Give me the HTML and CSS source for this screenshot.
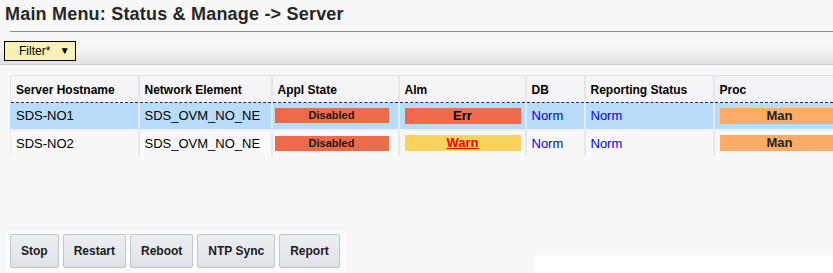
FILE: index.html
```html
<!DOCTYPE html>
<html lang="en">
<head>
  <meta charset="UTF-8" />
  <title>Status &amp; Manage - Server</title>
  <link rel="stylesheet" href="styles.css">
</head>
<body>

  <!-- Page title -->
  <div class="page-head">
    <h1>Main Menu: Status &amp; Manage -&gt; Server</h1>
    <div class="rule"></div>
  </div>

  <!-- Filter toolbar -->
  <div class="toolbar">
    <button class="filter">Filter* <span class="caret">&#9660;</span></button>
  </div>

  <!-- Server grid -->
  <div class="grid-wrap">
    <table class="grid">
      <colgroup>
        <col class="c-host"><col class="c-ne"><col class="c-appl"><col class="c-alm">
        <col class="c-db"><col class="c-rep"><col class="c-proc">
      </colgroup>
      <thead>
        <tr>
          <th>Server Hostname</th>
          <th>Network Element</th>
          <th>Appl State</th>
          <th>Alm</th>
          <th>DB</th>
          <th>Reporting Status</th>
          <th class="proc-head">Proc</th>
        </tr>
      </thead>
      <tbody>
        <tr class="selected">
          <td>SDS-NO1</td>
          <td>SDS_OVM_NO_NE</td>
          <td><div class="state state-disabled">Disabled</div></td>
          <td><div class="alm alm-err">Err</div></td>
          <td class="norm">Norm</td>
          <td class="norm">Norm</td>
          <td><div class="proc">Man</div></td>
        </tr>
        <tr>
          <td>SDS-NO2</td>
          <td>SDS_OVM_NO_NE</td>
          <td><div class="state state-disabled">Disabled</div></td>
          <td><div class="alm alm-warn"><a href="#">Warn</a></div></td>
          <td class="norm">Norm</td>
          <td class="norm">Norm</td>
          <td><div class="proc">Man</div></td>
        </tr>
      </tbody>
    </table>
  </div>

  <!-- Action buttons -->
  <div class="footer">
    <div class="actions">
      <button class="btn">Stop</button>
      <button class="btn">Restart</button>
      <button class="btn">Reboot</button>
      <button class="btn">NTP Sync</button>
      <button class="btn">Report</button>
    </div>
    <div class="footer-gap"></div>
    <div class="footer-blank"></div>
  </div>

</body>
</html>
```

FILE: styles.css
```css
* {
  box-sizing: border-box;
  margin: 0;
  padding: 0;
}

html, body {
  width: 833px;
  height: 273px;
  overflow: hidden;
}

body {
  font-family: "Liberation Sans", Arial, sans-serif;
  background: #f8f8f8;
  color: #000;
}

/* Title */
.page-head {
  height: 33px;
}

h1 {
  font-size: 18px;
  font-weight: bold;
  color: #262626;
  padding: 4px 0 0 5px;
  height: 32px;
  letter-spacing: 0.2px;
}

.rule {
  margin-left: 10px;
  height: 1px;
  background: #8a8a8a;
  margin-top: -1px;
}

/* Toolbar */
.toolbar {
  height: 32px;
  padding: 8px 0 0 4px;
  background: linear-gradient(#f9f9f9 0%, #f6f6f6 45%, #e2e2e2 100%);
  border-bottom: 1px solid #cbcbcb;
}

.filter {
  width: 72px;
  height: 20px;
  background: #f8f1b8;
  border: 1px solid #000;
  font-family: "Liberation Sans", Arial, sans-serif;
  font-size: 12px;
  color: #000;
  text-align: left;
  padding-left: 14px;
}

.filter .caret {
  font-size: 10px;
  margin-left: 6px;
  position: relative;
  top: -1px;
}

/* Grid */
.grid-wrap {
  margin: 10px 0 0 10px;
  overflow: hidden;
  height: 84px;
}

.grid {
  table-layout: fixed;
  border-collapse: collapse;
  width: 832px;
}

.c-host { width: 128px; }
.c-ne { width: 133px; }
.c-appl { width: 127px; }
.c-alm { width: 127px; }
.c-db { width: 59px; }
.c-rep { width: 129px; }
.c-proc { width: 129px; }

.grid th {
  height: 27px;
  text-align: left;
  font-size: 12px;
  font-weight: bold;
  padding: 1px 0 0 5px;
  background: #f5f5f7;
  border-top: 1px solid #dfe2e8;
  border-left: 2px solid #e4e6ea;
  border-bottom: 1px dashed #1a237e;
}

.grid th:first-child {
  border-left: 1px solid #e4e6ea;
}

.grid th.proc-head {
  background: #f1f3f8;
}

.grid td {
  height: 27px;
  font-size: 13px;
  padding: 0 0 0 5px;
  border-left: 2px solid #e8e8e8;
  white-space: nowrap;
  vertical-align: middle;
}

.grid td:first-child {
  border-left: 1px solid #e8e8e8;
}

.grid tr.selected td {
  background: #b9dcfa;
  border-left-color: #dbeefd;
  border-bottom: 2px solid #eaf3fb;
}

.grid tr.selected td:first-child {
  border-left-color: #b9dcfa;
}

.grid tbody tr:last-child td {
  height: 26px;
}

.norm {
  color: #0000ee;
}

/* Status boxes */
.state {
  width: 114px;
  height: 15px;
  margin-left: -3px;
  font-size: 11px;
  font-weight: bold;
  text-align: center;
  line-height: 15px;
  color: #1a1a1a;
}

.state-disabled {
  background: #ed6a4b;
}

.alm {
  width: 116px;
  height: 16px;
  font-size: 13px;
  font-weight: bold;
  text-align: center;
  line-height: 16px;
}

.alm-err {
  background: #ee6a4b;
  color: #000;
}

.alm-warn {
  background: #f8d45e;
}

.alm-warn a {
  color: #f00;
}

.proc {
  width: 130px;
  height: 16px;
  background: #ffaa66;
  font-size: 13px;
  font-weight: bold;
  text-align: center;
  line-height: 16px;
  color: #222;
  padding-right: 10px;
}

/* Footer buttons */
.footer {
  margin-top: 72px;
  display: flex;
  height: 42px;
}

.actions {
  width: 341px;
  flex-shrink: 0;
  margin-left: 5px;
  background: #fbfbfb;
  display: flex;
  gap: 4px;
  padding: 3px 0 0 5px;
}

.btn {
  flex-shrink: 0;
  white-space: nowrap;
  height: 34px;
  padding: 0 10px;
  font-family: "Liberation Sans", Arial, sans-serif;
  font-size: 12px;
  font-weight: bold;
  color: #1a1a1a;
  background: linear-gradient(#eceff2, #dfe3e7);
  border: 1px solid #bfc6cd;
  border-radius: 2px;
}

.footer-gap {
  width: 189px;
  flex-shrink: 0;
}

.footer-blank {
  flex: 1;
  margin-top: 24px;
  background: #fff;
}
```
